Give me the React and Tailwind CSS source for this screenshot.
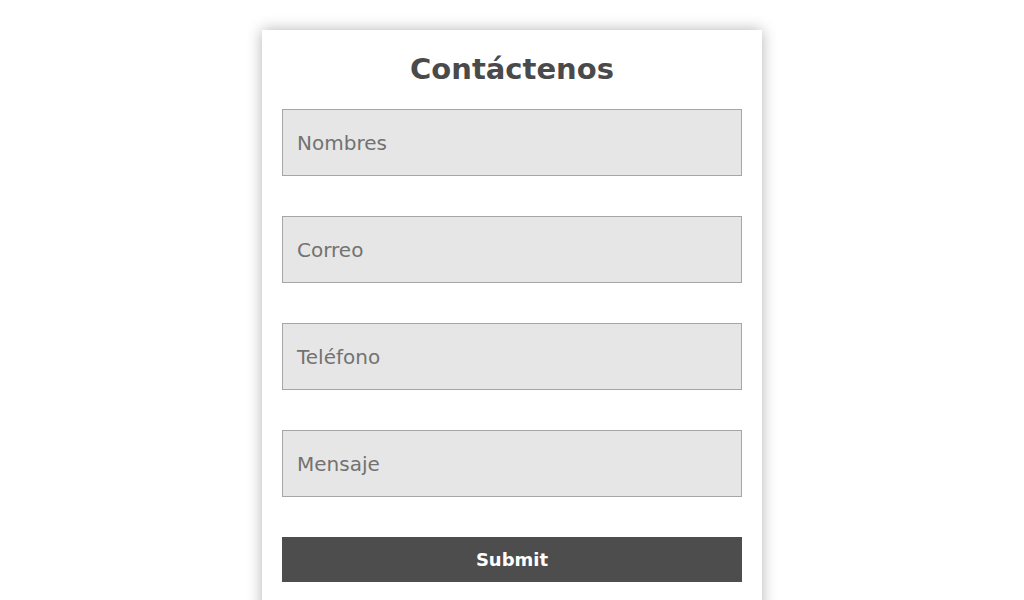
export default function App() {
  const fields = ["Nombres", "Correo", "Teléfono", "Mensaje"];
  return (
    <div className="w-full h-[600px] overflow-hidden bg-white pt-[30px]" style={{ fontFamily: '"DejaVu Sans", sans-serif' }}>
      <div className="mx-auto w-[500px] h-[620px] bg-white px-5 shadow-[0_0_14px_rgba(0,0,0,0.3)]">
        <h1 className="h-[79px] pt-[20px] text-center text-[29px] font-bold leading-[38px] text-[#4a4a4a]">Contáctenos</h1>
        <div className="flex flex-col gap-10">
          {fields.map((f) => (
            <div key={f} className="flex h-[67px] items-center border border-[#a6a6a6] bg-[#e6e6e6] px-[14px] text-[20px] text-[#727272]">
              {f}
            </div>
          ))}
          <button className="h-[45px] w-full bg-[#4d4d4d] text-[18px] font-bold text-white">Submit</button>
        </div>
      </div>
    </div>
  );
}
